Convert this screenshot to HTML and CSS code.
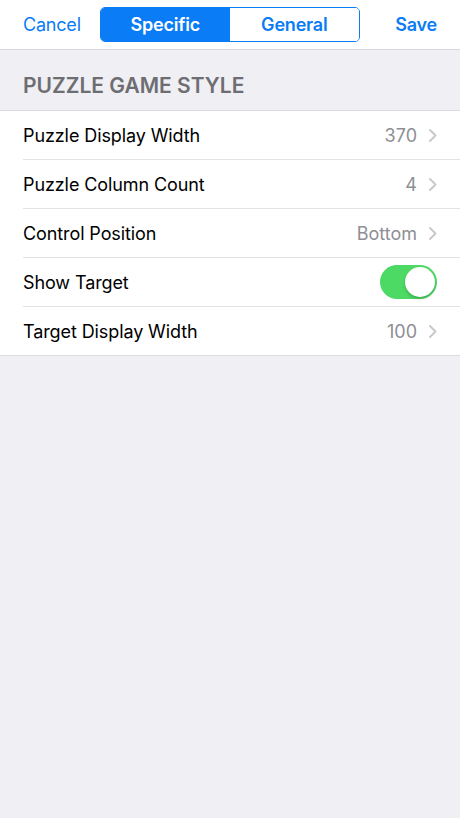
FILE: index.html
```html
<!DOCTYPE html>
<html lang="en">
<head>
  <meta charset="UTF-8">
  <meta name="viewport" content="width=device-width, initial-scale=1.0">
  <title>Puzzle Settings</title>
  <link rel="stylesheet" href="styles.css">
</head>
<body>
  <header class="navbar">
    <button class="nav-btn">Cancel</button>
    <div class="segment">
      <button class="seg on">Specific</button>
      <button class="seg">General</button>
    </div>
    <button class="nav-btn bold save">Save</button>
  </header>

  <section class="group">
    <h2 class="group-title">PUZZLE GAME STYLE</h2>
    <ul class="list">
      <li class="row"><span class="label">Puzzle Display Width</span><span class="value">370</span><svg class="chev" viewBox="0 0 8 13"><polyline points="1,1 6.5,6.5 1,12"/></svg></li>
      <li class="row"><span class="label">Puzzle Column Count</span><span class="value">4</span><svg class="chev" viewBox="0 0 8 13"><polyline points="1,1 6.5,6.5 1,12"/></svg></li>
      <li class="row"><span class="label">Control Position</span><span class="value">Bottom</span><svg class="chev" viewBox="0 0 8 13"><polyline points="1,1 6.5,6.5 1,12"/></svg></li>
      <li class="row"><span class="label">Show Target</span><span class="switch"><span class="knob"></span></span></li>
      <li class="row"><span class="label">Target Display Width</span><span class="value">100</span><svg class="chev" viewBox="0 0 8 13"><polyline points="1,1 6.5,6.5 1,12"/></svg></li>
    </ul>
  </section>
</body>
</html>
```
FILE: styles.css
```css
body{ margin:0; padding:0; background:#efeff4; font-family:"Inter","Liberation Sans",sans-serif; color:#000; }
button{ font-family:inherit; border:0; background:none; padding:0; margin:0; cursor:pointer; }

.navbar{
  height:50px; background:#fff; border-bottom:1px solid #d8d8dc;
  display:flex; align-items:center;
  padding:0 23px; box-sizing:border-box;
}
.nav-btn{ font-size:18px; color:#0a7cf5; letter-spacing:-0.2px; }
.nav-btn.bold{ font-weight:600; }
.save{ margin-left:auto; }

.segment{
  display:flex; width:260px; height:35px; box-sizing:border-box; margin-left:19px;
  border:1px solid #0a7cf5; border-radius:5px; overflow:hidden;
}
.seg{ flex:1; font-size:18px; font-weight:600; color:#0a7cf5; background:#fff; letter-spacing:-0.2px; }
.seg.on{ background:#0a7cf5; color:#fff; }

.group-title{
  margin:0; padding:23px 23px 12px; font-size:21px; font-weight:600;
  color:#6d6d72; letter-spacing:0;
}
.list{
  list-style:none; margin:0; padding:0 0 0 23px; background:#fff;
  border-top:1px solid #dcdce0; border-bottom:1px solid #dcdce0;
}
.row{
  height:48px; display:flex; align-items:center; padding-right:23px;
  border-bottom:1px solid #e3e3e6; font-size:18px;
}
.row:last-child{ border-bottom:0; }
.label{ flex:1; letter-spacing:-0.1px; }
.value{ color:#8e8e93; }
.chev{ width:8px; height:13px; margin-left:12px; }
.chev polyline{ fill:none; stroke:#c7c7cc; stroke-width:1.8; stroke-linecap:round; stroke-linejoin:round; }
.switch{
  width:57px; height:34px; border-radius:17px; background:#4cd964;
  position:relative; box-sizing:border-box;
}
.knob{
  position:absolute; right:2px; top:2px; width:30px; height:30px; border-radius:50%;
  background:#fff; box-shadow:0 2px 3px rgba(0,0,0,0.2);
}
```
